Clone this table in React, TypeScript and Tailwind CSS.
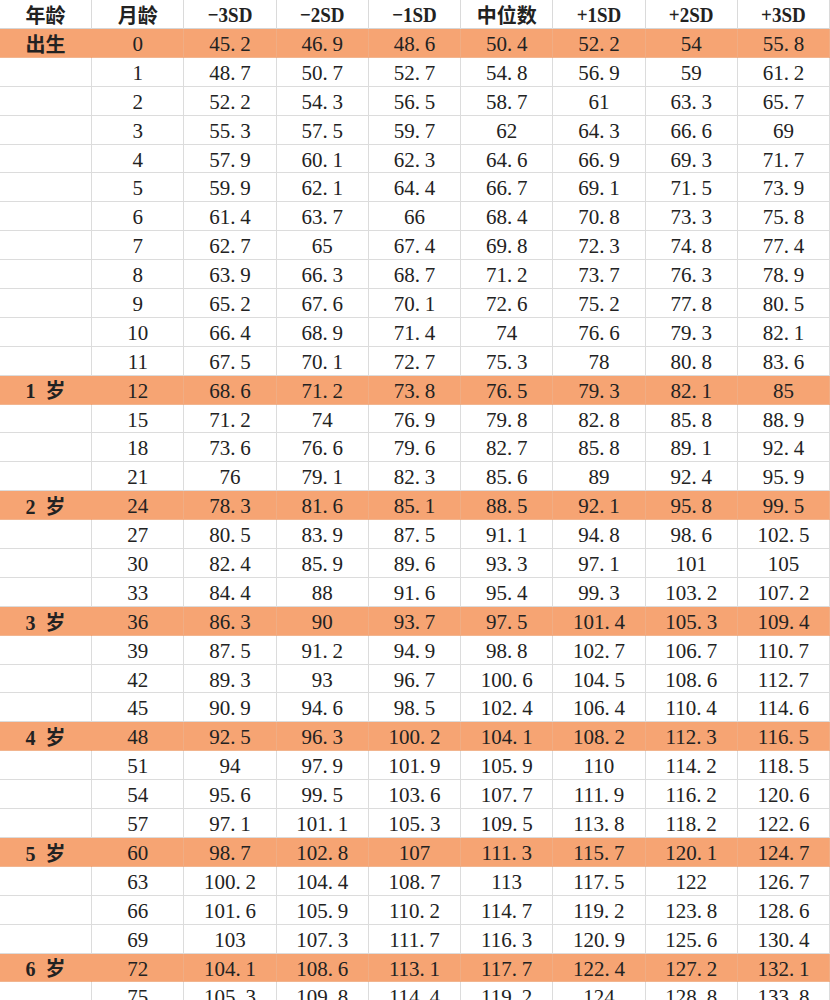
const headers = ["年龄", "月龄", "−3SD", "−2SD", "−1SD", "中位数", "+1SD", "+2SD", "+3SD"];

const rows: [string, number, string[]][] = [
  ["出生", 0, ["45.2", "46.9", "48.6", "50.4", "52.2", "54", "55.8"]],
  ["", 1, ["48.7", "50.7", "52.7", "54.8", "56.9", "59", "61.2"]],
  ["", 2, ["52.2", "54.3", "56.5", "58.7", "61", "63.3", "65.7"]],
  ["", 3, ["55.3", "57.5", "59.7", "62", "64.3", "66.6", "69"]],
  ["", 4, ["57.9", "60.1", "62.3", "64.6", "66.9", "69.3", "71.7"]],
  ["", 5, ["59.9", "62.1", "64.4", "66.7", "69.1", "71.5", "73.9"]],
  ["", 6, ["61.4", "63.7", "66", "68.4", "70.8", "73.3", "75.8"]],
  ["", 7, ["62.7", "65", "67.4", "69.8", "72.3", "74.8", "77.4"]],
  ["", 8, ["63.9", "66.3", "68.7", "71.2", "73.7", "76.3", "78.9"]],
  ["", 9, ["65.2", "67.6", "70.1", "72.6", "75.2", "77.8", "80.5"]],
  ["", 10, ["66.4", "68.9", "71.4", "74", "76.6", "79.3", "82.1"]],
  ["", 11, ["67.5", "70.1", "72.7", "75.3", "78", "80.8", "83.6"]],
  ["1 岁", 12, ["68.6", "71.2", "73.8", "76.5", "79.3", "82.1", "85"]],
  ["", 15, ["71.2", "74", "76.9", "79.8", "82.8", "85.8", "88.9"]],
  ["", 18, ["73.6", "76.6", "79.6", "82.7", "85.8", "89.1", "92.4"]],
  ["", 21, ["76", "79.1", "82.3", "85.6", "89", "92.4", "95.9"]],
  ["2 岁", 24, ["78.3", "81.6", "85.1", "88.5", "92.1", "95.8", "99.5"]],
  ["", 27, ["80.5", "83.9", "87.5", "91.1", "94.8", "98.6", "102.5"]],
  ["", 30, ["82.4", "85.9", "89.6", "93.3", "97.1", "101", "105"]],
  ["", 33, ["84.4", "88", "91.6", "95.4", "99.3", "103.2", "107.2"]],
  ["3 岁", 36, ["86.3", "90", "93.7", "97.5", "101.4", "105.3", "109.4"]],
  ["", 39, ["87.5", "91.2", "94.9", "98.8", "102.7", "106.7", "110.7"]],
  ["", 42, ["89.3", "93", "96.7", "100.6", "104.5", "108.6", "112.7"]],
  ["", 45, ["90.9", "94.6", "98.5", "102.4", "106.4", "110.4", "114.6"]],
  ["4 岁", 48, ["92.5", "96.3", "100.2", "104.1", "108.2", "112.3", "116.5"]],
  ["", 51, ["94", "97.9", "101.9", "105.9", "110", "114.2", "118.5"]],
  ["", 54, ["95.6", "99.5", "103.6", "107.7", "111.9", "116.2", "120.6"]],
  ["", 57, ["97.1", "101.1", "105.3", "109.5", "113.8", "118.2", "122.6"]],
  ["5 岁", 60, ["98.7", "102.8", "107", "111.3", "115.7", "120.1", "124.7"]],
  ["", 63, ["100.2", "104.4", "108.7", "113", "117.5", "122", "126.7"]],
  ["", 66, ["101.6", "105.9", "110.2", "114.7", "119.2", "123.8", "128.6"]],
  ["", 69, ["103", "107.3", "111.7", "116.3", "120.9", "125.6", "130.4"]],
  ["6 岁", 72, ["104.1", "108.6", "113.1", "117.7", "122.4", "127.2", "132.1"]],
  ["", 75, ["105.3", "109.8", "114.4", "119.2", "124", "128.8", "133.8"]],
];

// SimSun-like: half-width period, so split number around the dot
function Num({ v }: { v: string }) {
  const [a, b] = v.split(".");
  return (
    <span className="inline-flex items-baseline">
      {a}
      {b !== undefined && (
        <>
          <span className="inline-block w-[10px]">.</span>
          {b}
        </>
      )}
    </span>
  );
}

export default function App() {
  return (
    <div className="w-[830px] h-[1000px] overflow-hidden bg-white text-[#222]">
      {/* header */}
      <div className="grid grid-cols-9 h-[29px] border-b border-[#d6d6d6]">
        {headers.map((h, i) => (
          <div
            key={h}
            className={`flex items-center justify-center border-r border-[#dadada] font-bold ${
              i < 2 || i === 5
                ? "text-[20px] font-['Noto_Sans_CJK_SC',sans-serif]"
                : "text-[19px] font-['Liberation_Serif','Noto_Sans_CJK_SC',serif]"
            }`}
          >
            <span className={i < 2 || i === 5 ? "" : "inline-block scale-y-[1.15]"}>{h}</span>
          </div>
        ))}
      </div>

      {rows.map(([label, month, vals]) => {
        const hl = label !== "";
        return (
          <div
            key={month}
            className={`grid grid-cols-9 h-[28.9px] border-b ${
              hl ? "bg-[#f6a473] border-[#f2b58f]" : "border-[#dcdcdc]"
            }`}
          >
            <div
              className={`flex items-center justify-center border-r font-bold text-[20px] font-['Liberation_Serif','Noto_Sans_CJK_SC',serif] whitespace-pre ${
                hl ? "border-[#f6a473]" : "border-[#dcdcdc]"
              }`}
            >
              {label.replace(" ", "  ")}
            </div>
            {[String(month), ...vals].map((v, j) => (
              <div
                key={j}
                className={`flex items-center justify-center border-r text-[21px] font-['Liberation_Serif',serif] ${
                  hl ? "border-[#f0ad84]" : "border-[#dcdcdc]"
                }`}
              >
                <Num v={v} />
              </div>
            ))}
          </div>
        );
      })}
    </div>
  );
}
